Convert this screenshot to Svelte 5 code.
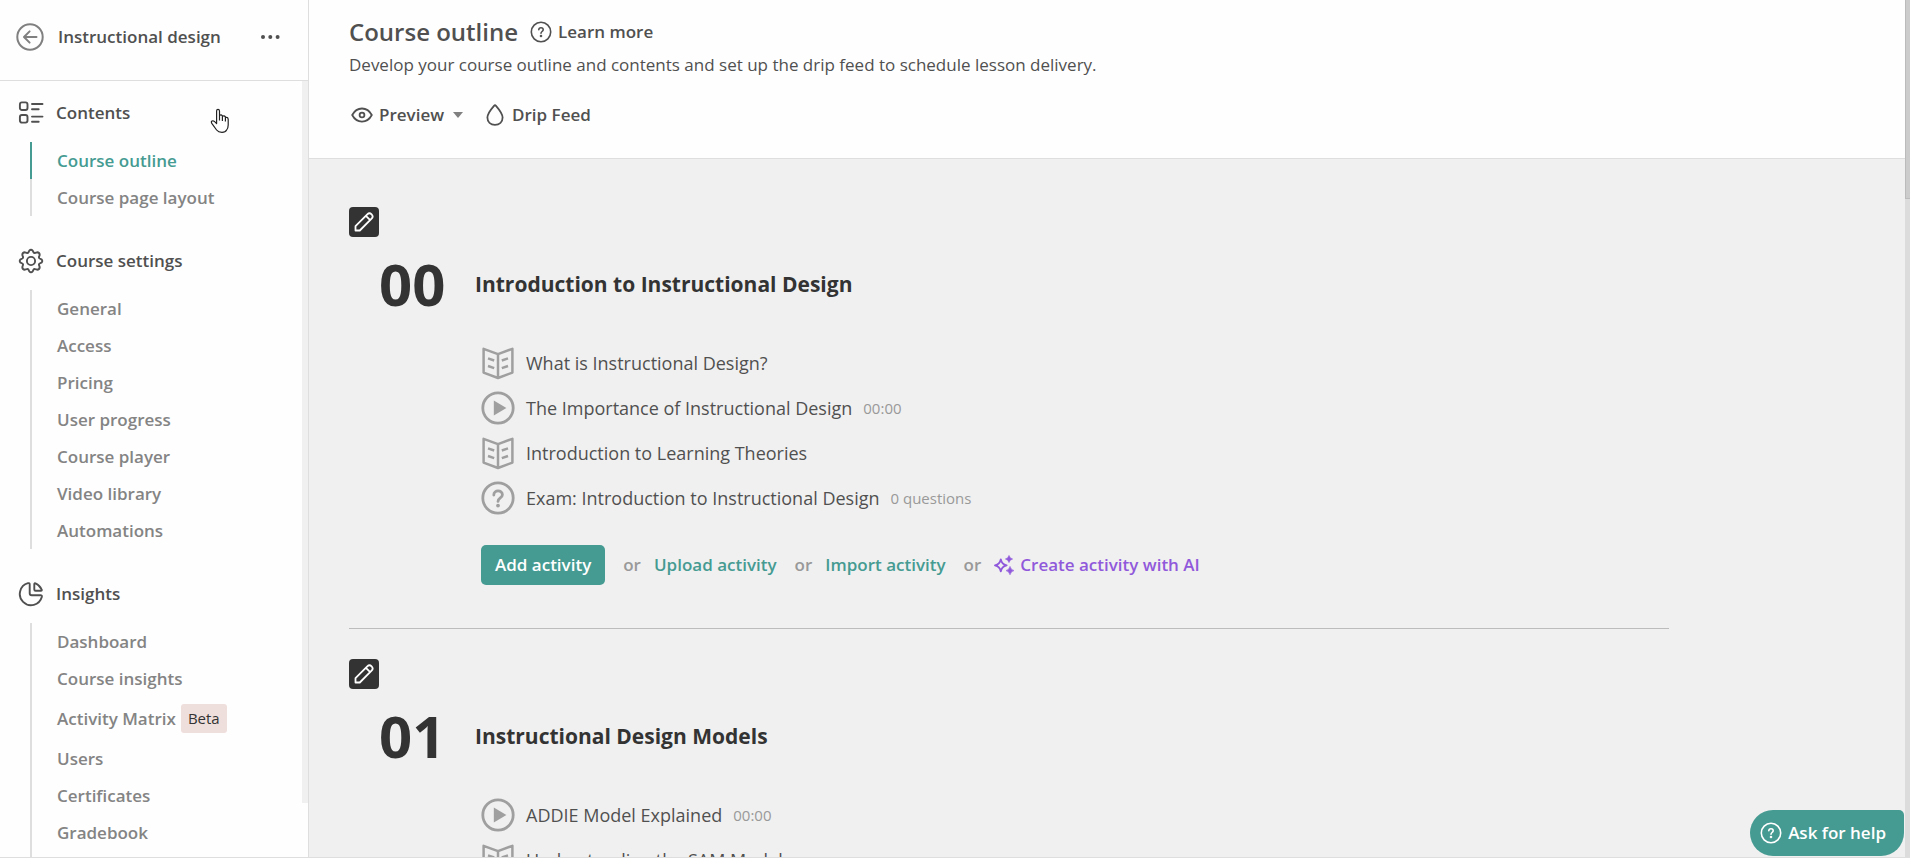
<script>
  const sections = [
    { title: 'Contents', icon: 'contents', items: [{ label: 'Course outline', active: true }, { label: 'Course page layout' }] },
    {
      title: 'Course settings',
      icon: 'gear',
      items: [
        { label: 'General' },
        { label: 'Access' },
        { label: 'Pricing' },
        { label: 'User progress' },
        { label: 'Course player' },
        { label: 'Video library' },
        { label: 'Automations' }
      ]
    },
    {
      title: 'Insights',
      icon: 'pie',
      items: [
        { label: 'Dashboard' },
        { label: 'Course insights' },
        { label: 'Activity Matrix', badge: 'Beta' },
        { label: 'Users' },
        { label: 'Certificates' },
        { label: 'Gradebook' }
      ]
    }
  ];

  const chapters = [
    {
      number: '00',
      title: 'Introduction to Instructional Design',
      activities: [
        { type: 'book', title: 'What is Instructional Design?' },
        { type: 'play', title: 'The Importance of Instructional Design', meta: '00:00' },
        { type: 'book', title: 'Introduction to Learning Theories' },
        { type: 'question', title: 'Exam: Introduction to Instructional Design', meta: '0 questions' }
      ],
      editable: true
    },
    {
      number: '01',
      title: 'Instructional Design Models',
      activities: [
        { type: 'play', title: 'ADDIE Model Explained', meta: '00:00' },
        { type: 'book', title: 'Understanding the SAM Model' }
      ]
    }
  ];
</script>

{#snippet icon(name, size)}
  {#if name === 'back'}
    <svg width={size} height={size} viewBox="0 0 28 28" fill="none" stroke="currentColor" stroke-width="2" stroke-linecap="round" stroke-linejoin="round" aria-hidden="true">
      <circle cx="14" cy="14" r="12.7" />
      <path d="M20.5 14H8.2M13.6 8.4 8 14l5.6 5.6" />
    </svg>
  {:else if name === 'dots'}
    <svg width={size} height={size} viewBox="0 0 20 20" fill="currentColor" aria-hidden="true">
      <circle cx="3" cy="10" r="2" /><circle cx="10.3" cy="10" r="2" /><circle cx="17.6" cy="10" r="2" />
    </svg>
  {:else if name === 'contents'}
    <svg width={size} height={size} viewBox="0 0 26 26" fill="none" stroke="currentColor" stroke-width="1.9" stroke-linecap="round" aria-hidden="true">
      <rect x="1.9" y="2.4" width="7.6" height="7.6" rx="2" />
      <rect x="1.9" y="15" width="7.6" height="7.6" rx="2" />
      <path d="M14 4h10.5M14 9.2h6.7M14 16.6h10.5M14 21.8h6.7" />
    </svg>
  {:else if name === 'gear'}
    <svg width={size} height={size} viewBox="0 0 26 26" fill="none" stroke="currentColor" stroke-width="1.9" stroke-linejoin="round" aria-hidden="true">
      <circle cx="13" cy="13" r="4.1" />
      <path d="M11.3 2.6Q13 .8 14.7 2.6L15.5 4.3Q16.1 5.4 17.3 4.9L19.1 4.3Q21.6 4.4 21.7 6.9L21.1 8.7Q20.6 9.9 21.7 10.5L23.4 11.3Q25.2 13 23.4 14.7L21.7 15.5Q20.6 16.1 21.1 17.3L21.7 19.1Q21.6 21.6 19.1 21.7L17.3 21.1Q16.1 20.6 15.5 21.7L14.7 23.4Q13 25.2 11.3 23.4L10.5 21.7Q9.9 20.6 8.7 21.1L6.9 21.7Q4.4 21.6 4.3 19.1L4.9 17.3Q5.4 16.1 4.3 15.5L2.6 14.7Q.8 13 2.6 11.3L4.3 10.5Q5.4 9.9 4.9 8.7L4.3 6.9Q4.4 4.4 6.9 4.3L8.7 4.9Q9.9 5.4 10.5 4.3Z" />
    </svg>
  {:else if name === 'pie'}
    <svg width={size} height={size} viewBox="0 0 26 26" fill="none" stroke="currentColor" stroke-width="1.9" stroke-linejoin="round" aria-hidden="true">
      <path d="M11.7 3.6Q11.7 1.8 10 2.2A11.2 11.2 0 1 0 23.8 16Q24.2 14.3 22.4 14.3H13.7Q11.7 14.3 11.7 12.3Z" />
      <path d="M16.3 3.1Q16.3 1.8 17.6 2.4A11.4 11.4 0 0 1 23.6 8.5Q24.2 9.8 22.9 9.8H17.6Q16.3 9.8 16.3 8.5Z" />
    </svg>
  {:else if name === 'help'}
    <svg width={size} height={size} viewBox="0 0 22 22" fill="none" stroke="currentColor" stroke-width="1.6" stroke-linecap="round" aria-hidden="true">
      <circle cx="11" cy="11" r="9.7" />
      <path d="M8.8 8.8C8.8 6 13.2 6 13.2 8.7C13.2 10.4 11 10.6 11 12.2" />
      <circle cx="11" cy="15" r=".5" fill="currentColor" />
    </svg>
  {:else if name === 'eye'}
    <svg width={size} height={size} viewBox="0 0 22 22" fill="none" stroke="currentColor" stroke-width="1.8" stroke-linejoin="round" aria-hidden="true">
      <path d="M1.2 11C5.8 2.3 16.2 2.3 20.8 11C16.2 19.7 5.8 19.7 1.2 11Z" />
      <circle cx="11" cy="11" r="2.4" />
    </svg>
  {:else if name === 'drop'}
    <svg width={size} height={size} viewBox="0 0 22 22" fill="none" stroke="currentColor" stroke-width="1.8" stroke-linejoin="round" aria-hidden="true">
      <path d="M10 1.8Q11 .7 12 1.8C14.8 5 18.6 9.6 18.6 13.6C18.6 18 15.4 20.8 11 20.8S3.4 18 3.4 13.6C3.4 9.6 7.2 5 10 1.8Z" />
    </svg>
  {:else if name === 'pencil'}
    <svg width={size} height={size} viewBox="0 0 20 20" fill="none" stroke="currentColor" stroke-width="1.8" stroke-linejoin="round" aria-hidden="true">
      <path d="M1.5 18.5V14.2L13.3 2.4A3 3 0 0 1 17.6 6.7L5.8 18.5ZM11.9 3.8L16.2 8.1" />
    </svg>
  {:else if name === 'book'}
    <svg width={size} height={size} viewBox="0 0 34 34" fill="none" stroke="currentColor" stroke-width="2.5" stroke-linejoin="round" aria-hidden="true">
      <path d="M2.6 2.8L17 8.2L31.4 2.8V26.6L17 32L2.6 26.6ZM17 8.2V32" />
      <path d="M7 12.4L13.2 14.5M7 20L13.2 22.1M27 12.4L20.8 14.5M27 20L20.8 22.1" />
    </svg>
  {:else if name === 'play'}
    <svg width={size} height={size} viewBox="0 0 34 34" fill="none" stroke="currentColor" stroke-width="2.8" aria-hidden="true">
      <circle cx="17" cy="17" r="15.2" />
      <path d="M12.8 9.6V24.4L25.4 17Z" fill="currentColor" stroke="none" />
    </svg>
  {:else if name === 'question'}
    <svg width={size} height={size} viewBox="0 0 34 34" fill="none" stroke="currentColor" stroke-width="2.8" aria-hidden="true">
      <circle cx="17" cy="17" r="15.2" />
      <path d="M12.8 14C12.6 8.6 21.4 8.6 21.4 13.8C21.4 17 17 16.8 17 20.4" stroke-linecap="round" />
      <circle cx="17" cy="24.6" r="1.9" fill="currentColor" stroke="none" />
    </svg>
  {:else if name === 'sparkle'}
    <svg width={size} height={size} viewBox="0 0 20 20" fill="currentColor" aria-hidden="true">
      <path d="M6.8 4.4Q7.8 9.4 12.6 10.4Q7.8 11.4 6.8 16.4Q5.8 11.4 1 10.4Q5.8 9.4 6.8 4.4Z" fill="none" stroke="currentColor" stroke-width="1.9" stroke-linejoin="round" />
      <path d="M15 .4Q15.7 3.3 18.6 4Q15.7 4.7 15 7.6Q14.3 4.7 11.4 4Q14.3 3.3 15 .4ZM16 11.4Q16.8 14.8 20 15.6Q16.8 16.4 16 19.8Q15.2 16.4 12 15.6Q15.2 14.8 16 11.4Z" stroke="currentColor" stroke-width=".6" />
    </svg>
  {/if}
{/snippet}

<div class="app">
  <aside class="sidebar">
    <div class="course-bar">
      <button class="plain back" aria-label="Back">{@render icon('back', 28)}</button>
      <span class="course-name">Instructional design</span>
      <button class="plain more" aria-label="More options">{@render icon('dots', 20)}</button>
    </div>
    <div class="nav-area">
      <nav>
        {#each sections as section}
          <section class="nav-group">
            <h2>{@render icon(section.icon, 26)}<span>{section.title}</span></h2>
            <ul>
              {#each section.items as item}
                <li class:active={item.active} class:tall={item.badge}>
                  <a href="#top">{item.label}</a>
                  {#if item.badge}<span class="badge">{item.badge}</span>{/if}
                </li>
              {/each}
            </ul>
          </section>
        {/each}
      </nav>
      <div class="nav-scroll"></div>
    </div>
    <svg class="pointer" width="20" height="26" viewBox="0 0 20 26" fill="#fff" stroke="#222" stroke-width="1.2" stroke-linejoin="round" aria-hidden="true">
      <path d="M6.6 15.6V3Q6.6 1.4 8 1.4T9.5 3V9.4V7.6Q11 6.2 12.4 7.8V10V8.4Q14 7 15.4 8.8V11V9.6Q17.8 8.6 18.2 11.4V17Q18.2 20 16.6 22Q15.4 24.4 12 24.4Q8.4 24.4 6.6 22L1.8 15.4Q.8 13.6 2 13Q3.2 12.4 4.4 13.4ZM9.5 9.4V12.4M12.4 10V13M15.4 11V13.4" />
    </svg>
  </aside>

  <main id="top">
    <header>
      <div class="title-row">
        <h1>Course outline</h1>
        <a class="learn" href="#top">{@render icon('help', 22)}Learn more</a>
      </div>
      <p>Develop your course outline and contents and set up the drip feed to schedule lesson delivery.</p>
      <div class="toolbar">
        <button class="plain tool">{@render icon('eye', 22)}Preview<span class="caret"></span></button>
        <button class="plain tool">{@render icon('drop', 22)}Drip Feed</button>
      </div>
    </header>

    <div class="outline">
      {#each chapters as chapter}
        <article>
          <button class="edit" aria-label="Edit section">{@render icon('pencil', 20)}</button>
          <div class="chapter-head">
            <span class="number">{chapter.number}</span>
            <h3>{chapter.title}</h3>
          </div>
          <div class="chapter-body">
            <ul>
              {#each chapter.activities as activity}
                <li>
                  {@render icon(activity.type, 34)}
                  <a href="#top">{activity.title}</a>
                  {#if activity.meta}<span class="meta">{activity.meta}</span>{/if}
                </li>
              {/each}
            </ul>
            {#if chapter.editable}
              <div class="actions">
                <button class="add">Add activity</button>
                <span class="or">or</span>
                <a href="#top">Upload activity</a>
                <span class="or">or</span>
                <a href="#top">Import activity</a>
                <span class="or">or</span>
                <a class="ai" href="#top">{@render icon('sparkle', 20)}Create activity with AI</a>
              </div>
            {/if}
          </div>
        </article>
      {/each}
    </div>
    <button class="ask">{@render icon('help', 22)}Ask for help</button>
  </main>

  <div class="page-scroll"><div class="thumb"></div></div>
</div>

<style>
  :global(body) {
    margin: 0;
    background: #fff;
  }
  .app {
    display: flex;
    height: 100vh;
    box-sizing: border-box;
    overflow: hidden;
    border-bottom: 1px solid #dedede;
    color: #505050;
    font-family: 'Open Sans', 'Noto Sans', sans-serif;
    font-size: 17px;
    line-height: 24px;
  }
  h1, h2, h3, p, ul {
    margin: 0;
    padding: 0;
    list-style: none;
  }
  a {
    color: inherit;
    text-decoration: none;
  }
  button {
    font: inherit;
    cursor: pointer;
  }
  svg {
    display: block;
    flex: none;
  }
  .plain {
    display: flex;
    align-items: center;
    padding: 0;
    border: 0;
    background: none;
    color: inherit;
    font-weight: 550;
  }

  .sidebar {
    position: relative;
    display: flex;
    flex: none;
    flex-direction: column;
    width: 308px;
    border-right: 1px solid #dedede;
    background: #fefefe;
  }
  .course-bar {
    display: flex;
    align-items: center;
    padding: 17px 28px 23px 16px;
    border-bottom: 1px solid #dedede;
    line-height: 40px;
  }
  .back {
    color: #808080;
  }
  .course-name {
    flex: 1;
    margin-left: 14px;
    font-weight: 550;
  }
  .nav-area {
    display: flex;
    flex: 1;
    min-height: 0;
  }
  nav {
    flex: 1;
    padding-top: 17px;
    overflow: hidden;
  }
  .nav-group {
    margin-bottom: 30px;
  }
  h2 {
    display: flex;
    align-items: center;
    gap: 12px;
    height: 30px;
    margin-bottom: 14px;
    padding-left: 18px;
    font-size: 17px;
    font-weight: 550;
  }
  nav ul {
    margin-left: 30px;
    border-left: 2px solid #dedede;
  }
  .nav-group:last-child ul {
    padding-bottom: 37px;
  }
  nav li {
    display: flex;
    align-items: center;
    height: 37px;
    margin-left: -2px;
    padding-left: 25px;
    border-left: 2px solid transparent;
    color: #848484;
    font-weight: 550;
  }
  nav li.tall {
    height: 43px;
  }
  nav li.active {
    border-color: #459b92;
    color: #459b92;
  }
  .badge {
    margin-left: 5px;
    padding: 2px 7px 3px;
    border-radius: 3px;
    background: #efdfdc;
    color: #333;
    font-size: 15px;
    font-weight: 400;
  }
  .nav-scroll {
    width: 6px;
    height: 93%;
    background: #f0f0f0;
  }
  .pointer {
    position: absolute;
    top: 108px;
    left: 210px;
  }

  main {
    position: relative;
    flex: 1;
    min-width: 0;
    overflow: hidden;
    background: #f0f0f0;
  }
  header {
    padding: 12px 40px 23px;
    border-bottom: 1px solid #dedede;
    background: #fefefe;
  }
  .title-row {
    display: flex;
    align-items: center;
    gap: 12px;
    height: 40px;
  }
  h1 {
    font-size: 24px;
    font-weight: 550;
  }
  .learn {
    display: flex;
    align-items: center;
    gap: 6px;
    font-weight: 550;
  }
  header p {
    margin-bottom: 18px;
    line-height: 25px;
  }
  .toolbar {
    display: flex;
    gap: 21px;
    height: 40px;
    padding-left: 2px;
  }
  .tool {
    gap: 6px;
  }
  .caret {
    margin-left: 3px;
    border: 5px solid transparent;
    border-top: 6px solid #808080;
    border-bottom: 0;
  }

  .outline {
    padding: 48px 40px 0;
  }
  article {
    max-width: 1320px;
    padding-bottom: 43px;
    margin-bottom: 30px;
    border-bottom: 1px solid #bcbcbc;
  }
  .edit {
    display: flex;
    align-items: center;
    justify-content: center;
    width: 30px;
    height: 30px;
    padding: 0;
    border: 0;
    border-radius: 4px;
    background: #333;
    color: #fff;
  }
  .chapter-head {
    display: flex;
    align-items: center;
    height: 60px;
    margin: 17px 0 26px;
    color: #333;
    font-weight: 700;
  }
  .number {
    width: 96px;
    padding-left: 30px;
    font-size: 58px;
  }
  h3 {
    font-size: 21px;
  }
  .chapter-body {
    padding-left: 132px;
  }
  .chapter-body li {
    display: flex;
    align-items: center;
    height: 45px;
    font-size: 18px;
  }
  .chapter-body li svg {
    margin-right: 11px;
    color: #9f9f9f;
  }
  .meta {
    margin-left: 11px;
    color: #999;
    font-size: 15px;
  }
  .actions {
    display: flex;
    align-items: center;
    margin-top: 25px;
    color: #459b92;
    font-weight: 550;
  }
  .add {
    height: 40px;
    padding: 0 14px;
    border: 0;
    border-radius: 5px;
    background: #459b92;
    color: #fff;
    font-weight: 600;
  }
  .or {
    margin: 0 13px 0 18px;
    color: #999;
  }
  .ai {
    display: flex;
    align-items: center;
    gap: 6px;
    color: #9059db;
  }
  .ask {
    position: absolute;
    right: 1px;
    bottom: 1px;
    display: flex;
    align-items: center;
    gap: 6px;
    height: 46px;
    padding: 0 18px 0 10px;
    border: 0;
    border-radius: 23px 5px 23px 23px;
    background: #459b92;
    color: #fff;
    font-weight: 600;
  }
  .page-scroll {
    flex: none;
    width: 5px;
    background: #dcdcdc;
  }
  .thumb {
    box-sizing: border-box;
    height: 199px;
    border: 1px solid #bbb;
    border-width: 0 0 1px 1px;
    background: #ccc;
  }
</style>
